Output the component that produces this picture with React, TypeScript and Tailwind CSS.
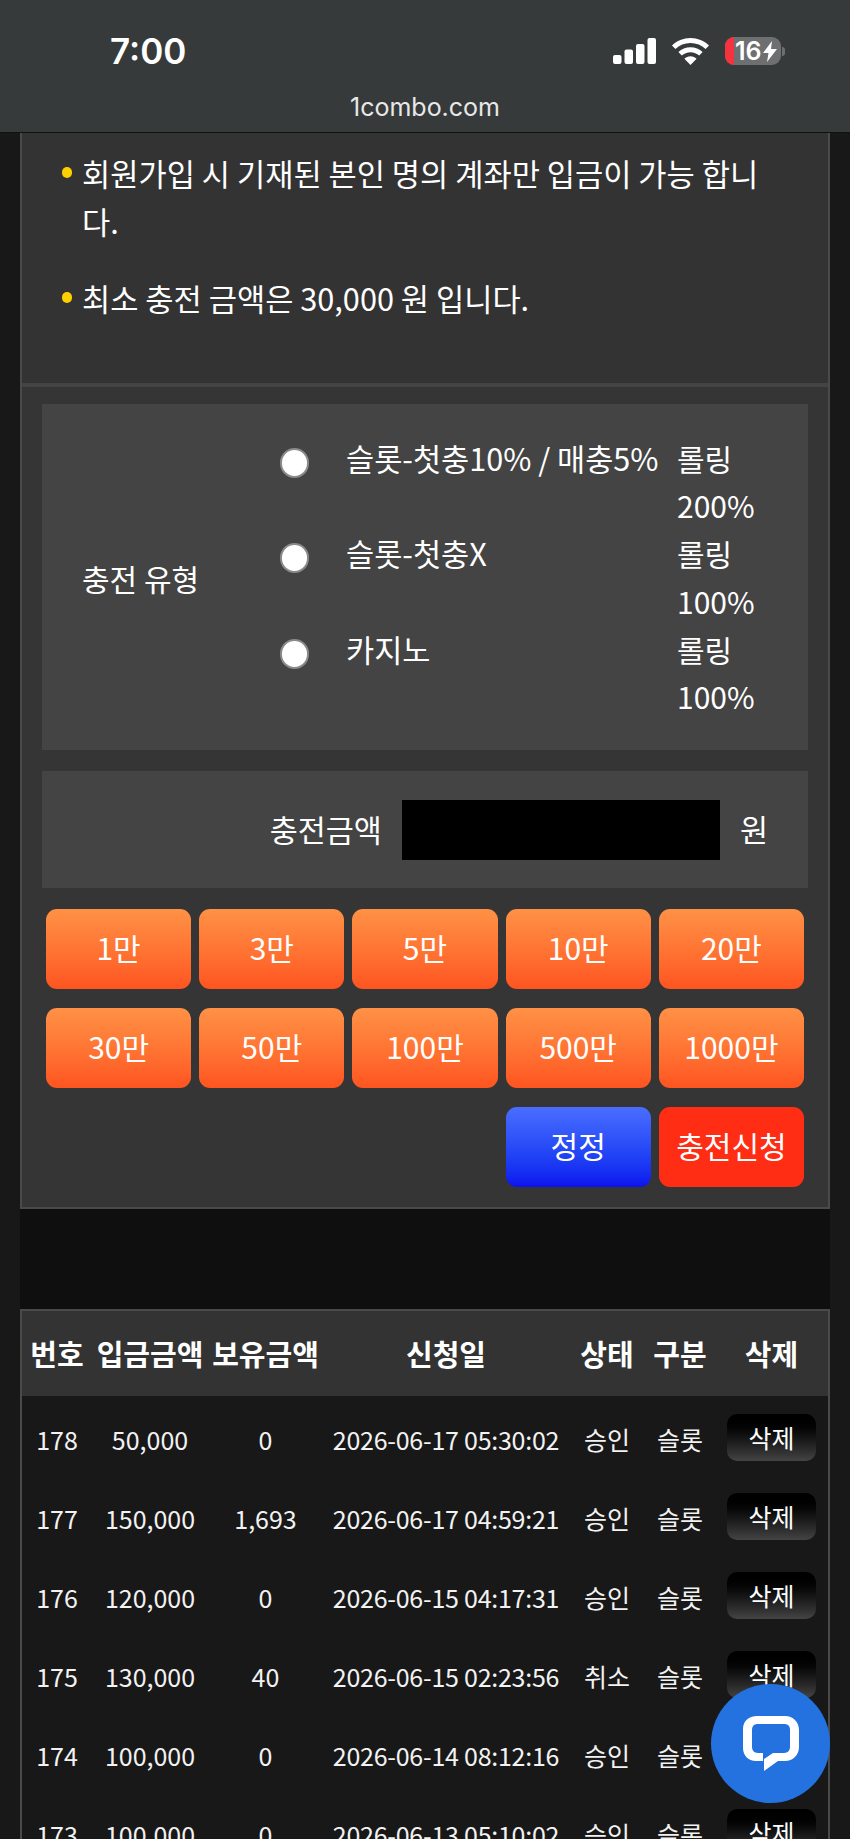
const amounts = ["1만", "3만", "5만", "10만", "20만", "30만", "50만", "100만", "500만", "1000만"];

const bonusTypes = [
  { label: "슬롯-첫충10% / 매충5%", rolling: "200%" },
  { label: "슬롯-첫충X", rolling: "100%" },
  { label: "카지노", rolling: "100%" },
];

const history = [
  { no: 178, amount: "50,000", balance: "0", date: "2026-06-17 05:30:02", status: "승인" },
  { no: 177, amount: "150,000", balance: "1,693", date: "2026-06-17 04:59:21", status: "승인" },
  { no: 176, amount: "120,000", balance: "0", date: "2026-06-15 04:17:31", status: "승인" },
  { no: 175, amount: "130,000", balance: "40", date: "2026-06-15 02:23:56", status: "취소" },
  { no: 174, amount: "100,000", balance: "0", date: "2026-06-14 08:12:16", status: "승인" },
  { no: 173, amount: "100,000", balance: "0", date: "2026-06-13 05:10:02", status: "승인" },
];

function StatusIcons() {
  return (
    <div className="flex items-center gap-[16px]">
      <svg width="43" height="26" viewBox="0 0 43 26" fill="white">
        <rect x="0" y="17" width="8.5" height="9" rx="2" />
        <rect x="11.5" y="11.5" width="8.5" height="14.5" rx="2" />
        <rect x="23" y="6" width="8.5" height="20" rx="2" />
        <rect x="34.5" y="0" width="8.5" height="26" rx="2" />
      </svg>
      <svg width="37" height="27" viewBox="0 0 37 27" fill="white">
        <path d="M18.5 0C11.3 0 5 2.8 0 7.4l3.4 3.6c4-3.7 9.2-6 15.1-6s11.1 2.3 15.1 6L37 7.4C32 2.8 25.7 0 18.5 0z" />
        <path d="M18.5 9.2c-4.7 0-8.9 1.8-12.1 4.8l3.4 3.6c2.3-2.1 5.3-3.4 8.7-3.4s6.4 1.3 8.7 3.4l3.4-3.6c-3.2-3-7.4-4.8-12.1-4.8z" />
        <path d="M18.5 18.3c-2.4 0-4.5.9-6.1 2.4l6.1 6.3 6.1-6.3c-1.6-1.5-3.7-2.4-6.1-2.4z" />
      </svg>
      <div className="flex items-center gap-[1px]">
        <div className="relative flex h-[28px] w-[56px] items-center overflow-hidden rounded-[9px] bg-[#6e6f71] pl-[10px]">
          <div className="absolute inset-y-0 left-0 w-[9px] bg-[#f5333f]" />
          <span className="relative text-[25px] leading-none font-semibold text-white">16</span>
          <svg className="relative ml-[1px]" width="14" height="21" viewBox="0 0 14 21" fill="white">
            <path d="M9 0L0 12h5.5L4 21l10-13H8z" />
          </svg>
        </div>
        <div className="h-[9px] w-[3px] rounded-r-full bg-[#6e6f71]" />
      </div>
    </div>
  );
}

function AmountButton({ label }: { label: string }) {
  return (
    <button className="h-[80px] rounded-[11px] bg-gradient-to-b from-[#ff9145] to-[#ff5420] pb-[3px] text-[30px] text-white">
      {label}
    </button>
  );
}

export default function App() {
  return (
    <div className="relative h-[1839px] overflow-hidden bg-[#181818] font-['Noto_Sans_CJK_KR',sans-serif] text-white">
      {/* 브라우저 상단바 */}
      <header className="h-[133px] border-b border-[#111] bg-[#373a3a] font-['Inter',sans-serif]">
        <div className="flex items-center justify-between pt-[35px] pr-[65px] pl-[110px]">
          <span className="text-[35px] leading-[32px] font-semibold">7:00</span>
          <StatusIcons />
        </div>
        <div className="mt-[25px] text-center text-[25px] leading-[30px] text-[#e8e8e8]">1combo.com</div>
      </header>

      <main className="mx-[20px]">
        <section className="border-x-2 border-b-2 border-[#4a4a4a] bg-[#333]">
          {/* 안내 문구 */}
          <ul className="flex flex-col gap-[30px] pt-[16px] pr-[50px] pb-[61px] pl-[40px] text-[30.7px] leading-[47.5px]">
            <li className="flex">
              <span className="mt-[18px] mr-[10px] h-[11px] w-[10px] shrink-0 rounded-full bg-[#ffd000]" />
              <span className="break-all">회원가입 시 기재된 본인 명의 계좌만 입금이 가능 합니 다.</span>
            </li>
            <li className="flex">
              <span className="mt-[18px] mr-[10px] h-[11px] w-[10px] shrink-0 rounded-full bg-[#ffd000]" />
              <span>최소 충전 금액은 30,000 원 입니다.</span>
            </li>
          </ul>
          <div className="h-[4px] bg-[#444]" />

          <div className="bg-[#353535] px-[20px] pt-[17px] pb-[20px]">
            {/* 충전 유형 */}
            <div className="flex items-center bg-[#444] pt-[31px] pb-[29px] pl-[40px] text-[30px] leading-[47.5px]">
              <div className="mt-[2px] w-[198px] shrink-0">충전 유형</div>
              <div className="flex flex-col">
                {bonusTypes.map((type) => (
                  <div key={type.label} className="flex h-[95.5px]">
                    <div className="flex h-[47.5px] w-[66px] shrink-0 pt-[5px]">
                      <span className="mt-[8px] h-[30px] w-[29px] rounded-full border-2 border-[#8a8a8a] bg-white" />
                    </div>
                    <div className="w-[331px] shrink-0 text-[30.6px] whitespace-nowrap">{type.label}</div>
                    <div>
                      롤링
                      <br />
                      {type.rolling}
                    </div>
                  </div>
                ))}
              </div>
            </div>

            {/* 충전 금액 */}
            <div className="mt-[21px] flex h-[117px] items-center justify-end gap-[20px] bg-[#444] pr-[40px] text-[30.5px]">
              <span>충전금액</span>
              <div className="h-[60px] w-[318px] bg-black" />
              <span>원</span>
            </div>

            <div className="mt-[21px] grid grid-cols-5 gap-x-[8px] gap-y-[19px] px-[4px]">
              {amounts.map((amount) => (
                <AmountButton key={amount} label={amount} />
              ))}
              <button className="col-start-4 h-[80px] rounded-[11px] bg-gradient-to-b from-[#4a6dff] to-[#0f0fee] pb-[3px] text-[30px]">
                정정
              </button>
              <button className="h-[80px] rounded-[11px] bg-[#ff2d14] pb-[3px] text-[30px]">충전신청</button>
            </div>
          </div>
        </section>

        <div className="h-[100px] bg-[#0f0f0f]" />

        {/* 충전 내역 */}
        <section className="border-x-2 border-t-2 border-[#4a4a4a]">
          <table className="w-full table-fixed border-collapse text-center">
            <colgroup>
              <col className="w-[70px]" />
              <col className="w-[116px]" />
              <col className="w-[115px]" />
              <col className="w-[246px]" />
              <col className="w-[76px]" />
              <col className="w-[70px]" />
              <col />
            </colgroup>
            <thead>
              <tr className="h-[85px] bg-[#333] text-[29px] font-bold whitespace-nowrap">
                <th>번호</th>
                <th>입금금액</th>
                <th>보유금액</th>
                <th>신청일</th>
                <th>상태</th>
                <th>구분</th>
                <th>삭제</th>
              </tr>
            </thead>
            <tbody className="text-[25px] text-[#f2f2f2]">
              <tr className="h-[4px]" />
              {history.map((row) => (
                <tr key={row.no} className="h-[79px]">
                  <td>{row.no}</td>
                  <td>{row.amount}</td>
                  <td>{row.balance}</td>
                  <td className="tracking-[-0.25px] whitespace-nowrap">{row.date}</td>
                  <td>{row.status}</td>
                  <td>슬롯</td>
                  <td>
                    <button className="mb-[4px] h-[47px] w-[89px] rounded-[10px] bg-gradient-to-b from-black to-[#444] align-middle text-white">
                      삭제
                    </button>
                  </td>
                </tr>
              ))}
            </tbody>
          </table>
        </section>
      </main>

      {/* 라이브챗 버튼 */}
      <button className="absolute top-[1684px] left-[711px] flex h-[119px] w-[119px] items-center justify-center rounded-full bg-[#2472e0]">
        <svg width="56" height="55" viewBox="0 0 56 55" fill="white">
          <path d="M20 45H13C5 45 0 39 0 32V13C0 5 6 0 14 0H42C50 0 56 6 56 14V31C56 39 50 45 42 45H35L21 55V43L30 37H41C45 37 47 34 47 31V14C47 10 45 8 41 8H15C11 8 9 10 9 14V31C9 34 11 37 15 37H20Z" />
        </svg>
      </button>
    </div>
  );
}
